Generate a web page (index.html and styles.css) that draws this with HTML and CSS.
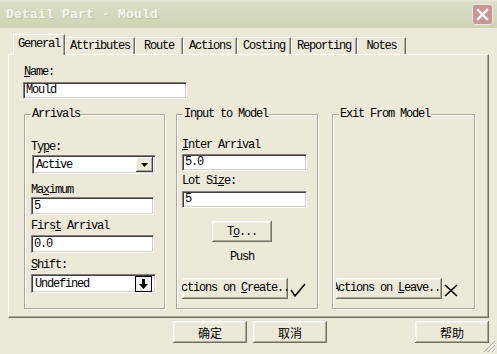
FILE: index.html
```html
<!DOCTYPE html>
<html>
<head>
<meta charset="utf-8">
<link rel="stylesheet" href="styles.css">
</head>
<body>
<div class="window">
  <div class="titlebar">
    <span class="title">Detail Part - Mould</span>
    <span class="close">
      <svg width="13" height="13" viewBox="0 0 13 13"><path d="M2 2 L11 11 M11 2 L2 11" stroke="#fff" stroke-width="2.4" stroke-linecap="square"/></svg>
    </span>
  </div>
  <div class="main">
    <div class="tabs">
      <div class="tab active t-general">General</div>
      <div class="tab t-attr">Attributes</div>
      <div class="tab t-route">Route</div>
      <div class="tab t-actions">Actions</div>
      <div class="tab t-costing">Costing</div>
      <div class="tab t-report">Reporting</div>
      <div class="tab t-notes">Notes</div>
    </div>
    <div class="panel">
      <div class="lbl"><u>N</u>ame:</div>
      <div class="input w-name">Mould</div>
      <div class="groups">
        <fieldset class="group g-arr">
          <legend>Arrivals</legend>
          <div class="gbody b-arr">
            <div class="lbl">Ty<u>p</u>e:</div>
            <div class="combo c-type">
              <span class="ctext">Active</span>
              <span class="cbtn"><svg width="7" height="4" viewBox="0 0 7 4"><path d="M0 0 H7 L3.5 4 Z" fill="#000"/></svg></span>
            </div>
            <div class="lbl m10">Ma<u>x</u>imum</div>
            <div class="input w-arr">5</div>
            <div class="lbl m5">Firs<u>t</u> Arrival</div>
            <div class="input w-arr m2">0.0</div>
            <div class="lbl m6"><u>S</u>hift:</div>
            <div class="combo c-shift">
              <span class="ctext">Undefined</span>
              <span class="sbtn"><svg width="9" height="10" viewBox="0 0 9 10"><path d="M3 0 H6 V5 H9 L4.5 10 L0 5 H3 Z" fill="#000"/></svg></span>
            </div>
          </div>
        </fieldset>
        <fieldset class="group g-in">
          <legend>Input to Model</legend>
          <div class="gbody b-in">
            <div class="lbl"><u>I</u>nter Arrival</div>
            <div class="input w-in m2">5.0</div>
            <div class="lbl m4">Lot Si<u>z</u>e:</div>
            <div class="input w-in m3">5</div>
            <div class="btn b-to">T<u>o</u>...</div>
            <div class="lbl push">Push</div>
            <div class="actrow">
              <div class="btn b-act"><span>Actions on <u>C</u>reate...</span></div>
              <svg class="mark" width="16" height="16" viewBox="0 0 16 16"><path d="M1 8 L5 14 L15 2" fill="none" stroke="#000" stroke-width="1.6"/></svg>
            </div>
          </div>
        </fieldset>
        <fieldset class="group g-exit">
          <legend>Exit From Model</legend>
          <div class="gbody b-exit">
            <div class="actrow">
              <div class="btn b-act"><span>Actions on <u>L</u>eave...</span></div>
              <svg class="mark" width="14" height="14" viewBox="0 0 14 14"><path d="M1 2 L13 13 M13 2 L1 13" fill="none" stroke="#000" stroke-width="1.6"/></svg>
            </div>
          </div>
        </fieldset>
      </div>
    </div>
    <div class="footer">
      <div class="btn fbtn">确定</div>
      <div class="btn fbtn">取消</div>
      <div class="btn fbtn help">帮助</div>
    </div>
  </div>
  <svg class="grip" width="13" height="13" viewBox="0 0 13 13">
    <path d="M12 1 L1 12 M12 5 L5 12 M12 9 L9 12" stroke="#aca899" stroke-width="1"/>
    <path d="M13 2 L2 13 M13 6 L6 13 M13 10 L10 13" stroke="#fff" stroke-width="1"/>
  </svg>
</div>
</body>
</html>
```

FILE: styles.css
```css
* { box-sizing: border-box; }
html, body { margin: 0; padding: 0; }
body {
  width: 497px; height: 354px; overflow: hidden;
  background: #ece9d8;
  font-family: "Liberation Mono", "DejaVu Sans Mono", monospace;
  font-size: 12px; letter-spacing: -1.2px; color: #000;
}
.window {
  position: relative;
  width: 497px; height: 354px;
  display: flex; flex-direction: column;
  background: #ece9d8;
}
.titlebar {
  height: 28px; flex: none;
  display: flex; align-items: center; justify-content: space-between;
  padding: 0 4px 0 6px;
  background: linear-gradient(#e6e9d6 0, #dadec5 3px, #d4d8bc 60%, #cfd3b6 100%);
}
.title {
  font-weight: bold; font-size: 13px; letter-spacing: 0.2px;
  color: #f6f6ee;
  text-shadow: 1px 1px 0 #c2c6aa;
}
.close {
  width: 21px; height: 21px; border-radius: 3px;
  background: #c89794;
  border: 1px solid #efe4e2;
  display: flex; align-items: center; justify-content: center;
}
.main {
  flex: 1; display: flex; flex-direction: column;
  padding: 6px 8px 0 8px;
}
.tabs {
  display: flex; align-items: flex-end;
  height: 20px; padding-left: 5px;
}
.tab {
  height: 17px;
  display: flex; align-items: center; justify-content: center;
  border-top: 1px solid #fff;
  border-left: 1px solid #fff;
  border-right: 1px solid #716f64;
  box-shadow: inset -1px 0 0 #aca899;
  white-space: nowrap;
}
.tab.active {
  height: 21px; margin-bottom: -1px;
  position: relative; z-index: 1;
  background: #ece9d8;
  padding-bottom: 2px;
}
.t-general { width: 52px; }
.t-attr { width: 70px; }
.t-route { width: 48px; }
.t-actions { width: 54px; }
.t-costing { width: 54px; }
.t-report { width: 66px; }
.t-notes { width: 49px; }
.panel {
  height: 264px; width: 481px;
  border-top: 1px solid #fff;
  border-left: 1px solid #fff;
  border-right: 1px solid #716f64;
  border-bottom: 1px solid #716f64;
  box-shadow: inset -1px -1px 0 #aca899;
  padding: 11px 0 0 15px;
}
.lbl { line-height: 13px; height: 13px; white-space: nowrap; }
.input {
  height: 17px; background: #fff;
  border: 1px solid; border-color: #808080 #fff #fff #808080;
  box-shadow: inset 1px 1px 0 #404040, inset -1px -1px 0 #d4d0c8;
  padding: 0 0 0 2px;
  line-height: 15px; white-space: nowrap;
}
.w-name { width: 164px; margin-top: 3px; margin-left: -1px; }
.w-arr { width: 123px; height: 18px; line-height: 16px; }
.w-in { width: 125px; }
.m2 { margin-top: 2px; }
.m3 { margin-top: 3px; }
.m4 { margin-top: 4px; }
.m5 { margin-top: 5px; }
.m6 { margin-top: 6px; }
.m10 { margin-top: 10px; }
.groups {
  display: flex; height: 201px; margin-top: 9px;
}
.group {
  margin: 0; padding: 0;
  border: 1px solid #aca899;
  box-shadow: inset 1px 1px 0 #fff, 1px 1px 0 #fff;
  display: flex; flex-direction: column;
  min-width: 0;
}
.group legend {
  line-height: 13px; padding: 0 1px; margin-left: 6px;
  background: #ece9d8;
}
.g-arr { width: 141px; }
.g-in { width: 142px; margin-left: 11px; }
.g-exit { width: 143px; margin-left: 14px; }
.gbody { flex: 1; display: flex; flex-direction: column; }
.b-arr { padding: 20px 0 14px 6px; }
.b-in { padding: 18px 0 9px 5px; }
.b-exit { padding: 18px 0 9px 3px; }
.combo {
  display: flex; align-items: center; justify-content: space-between;
  background: #fff;
  border: 1px solid; border-color: #808080 #fff #fff #808080;
  box-shadow: inset 1px 1px 0 #404040, inset -1px -1px 0 #d4d0c8;
  padding: 2px 2px 2px 3px;
  height: 19px;
}
.c-type { width: 124px; margin: 1px 0 0 1px; }
.c-shift { width: 125px; margin-top: 2px; }
.cbtn {
  width: 17px; height: 15px;
  display: flex; align-items: center; justify-content: center;
  background: #ece9d8;
  box-shadow: inset -1px -1px 0 #404040, inset 1px 1px 0 #fff, inset -2px -2px 0 #aca899;
}
.sbtn {
  width: 17px; height: 16px; margin-right: 1px;
  display: flex; align-items: center; justify-content: center;
  background: #f4f3ee;
  border: 1px solid #000;
}
.btn {
  display: flex; align-items: center; justify-content: center;
  background: #ece9d8;
  box-shadow: inset -1px -1px 0 #716f64, inset 1px 1px 0 #fff, inset -2px -2px 0 #aca899, inset 2px 2px 0 #f5f4ee;
  white-space: nowrap; overflow: hidden;
}
.b-to { width: 60px; height: 21px; margin: 13px 0 0 30px; }
.push { margin: 9px 0 0 48px; }
.actrow { margin-top: auto; display: flex; align-items: center; }
.b-act { width: 106px; height: 21px; padding-bottom: 1px; }
.b-act span { flex: none; }
.mark { margin-left: 2px; margin-top: 3px; }
.footer { display: flex; margin-top: 3px; padding-left: 165px; }
.fbtn {
  width: 74px; height: 22px;
  font-family: "Noto Sans CJK SC", sans-serif; font-size: 12px; letter-spacing: 0;
}
.fbtn + .fbtn { margin-left: 6px; }
.fbtn.help { margin-left: auto; }
.grip { position: absolute; right: 1px; bottom: 1px; }
```
